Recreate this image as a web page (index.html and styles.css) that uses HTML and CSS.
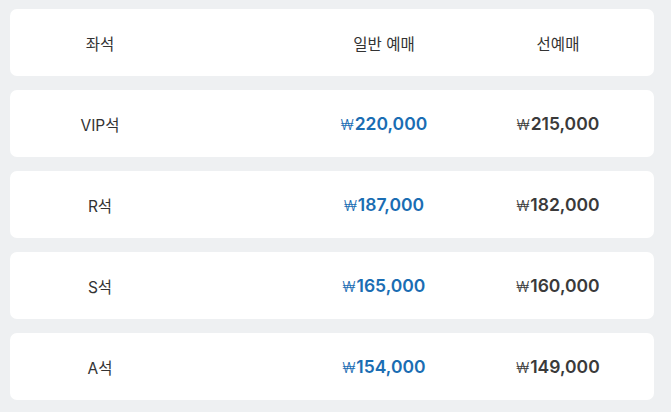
FILE: index.html
```html
<!DOCTYPE html>
<html lang="ko">
<head>
<meta charset="utf-8">
<link rel="stylesheet" href="styles.css">
</head>
<body>
<div class="table">
  <div class="row head">
    <div class="cell">좌석</div>
    <div class="spacer"></div>
    <div class="cell">일반 예매</div>
    <div class="cell">선예매</div>
  </div>
  <div class="row">
    <div class="cell seat">VIP석</div>
    <div class="spacer"></div>
    <div class="cell price blue"><span class="won">₩</span>220,000</div>
    <div class="cell price"><span class="won">₩</span>215,000</div>
  </div>
  <div class="row">
    <div class="cell seat">R석</div>
    <div class="spacer"></div>
    <div class="cell price blue"><span class="won">₩</span>187,000</div>
    <div class="cell price"><span class="won">₩</span>182,000</div>
  </div>
  <div class="row">
    <div class="cell seat">S석</div>
    <div class="spacer"></div>
    <div class="cell price blue"><span class="won">₩</span>165,000</div>
    <div class="cell price"><span class="won">₩</span>160,000</div>
  </div>
  <div class="row">
    <div class="cell seat">A석</div>
    <div class="spacer"></div>
    <div class="cell price blue"><span class="won">₩</span>154,000</div>
    <div class="cell price"><span class="won">₩</span>149,000</div>
  </div>
</div>
</body>
</html>
```

FILE: styles.css
```css
html, body {
  margin: 0;
  padding: 0;
  background: #eef0f2;
}
body {
  font-family: Inter, "Noto Sans CJK KR", sans-serif;
  color: #333333;
}
.table {
  width: 644px;
  padding: 9px 0 0 10px;
  display: flex;
  flex-direction: column;
  gap: 14px;
}
.row {
  height: 67px;
  background: #ffffff;
  border-radius: 7px;
  display: grid;
  grid-template-columns: 180px 1fr 174px 174px;
  padding-right: 9px;
  align-items: center;
}
.cell {
  text-align: center;
  font-size: 15.5px;
  white-space: nowrap;
}
.price {
  font-size: 17.5px;
  font-weight: 600;
  color: #3a3a3a;
}
.price.blue {
  color: #1a6db3;
}
.won {
  font-family: Inter, sans-serif;
  font-size: 14px;
  font-weight: 300;
  margin-right: 1px;
}
```
